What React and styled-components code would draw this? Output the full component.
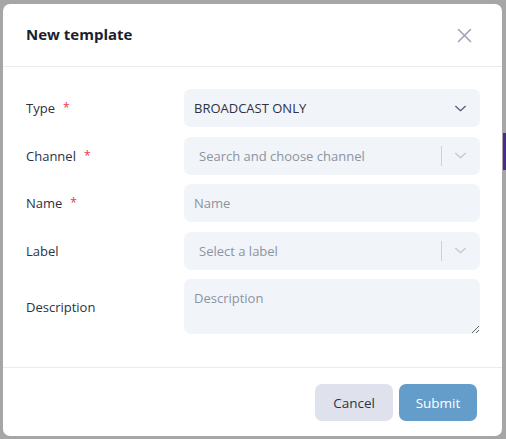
import React from 'react';
import styled, { createGlobalStyle } from 'styled-components';

const GlobalStyle = createGlobalStyle`
  html, body {
    margin: 0;
    padding: 0;
    background: #a6a6a6;
    font-family: "Open Sans", "Liberation Sans", sans-serif;
  }
`;

const Backdrop = styled.div`
  position: relative;
  width: 506px;
  height: 439px;
  box-sizing: border-box;
  padding: 4px 4px 3px 3px;
  overflow: hidden;
`;

// a sliver of the page behind the overlay
const BehindTab = styled.div`
  position: absolute;
  right: 0;
  top: 133px;
  width: 3px;
  height: 37px;
  background: #4b2a8f;
`;

const Modal = styled.div`
  position: relative;
  width: 499px;
  height: 432px;
  background: #fff;
  border-radius: 7px;
  display: flex;
  flex-direction: column;
`;

const Header = styled.div`
  height: 62px;
  display: flex;
  align-items: center;
  justify-content: space-between;
  padding: 0 30px 0 23px;
  border-bottom: 1px solid #e9ebf0;
`;

const Title = styled.h2`
  margin: 0 0 2px;
  font-size: 15px;
  font-weight: 700;
  color: #1b1e2e;
`;

const CloseButton = styled.button`
  border: 0;
  background: none;
  padding: 0;
  width: 15px;
  height: 15px;
  display: flex;
  cursor: pointer;
`;

const Body = styled.div`
  flex: 1;
  display: grid;
  grid-template-columns: 158px 296px;
  grid-auto-rows: min-content;
  row-gap: 9.5px;
  align-items: center;
  padding: 22px 22px 0 23px;
`;

const Label = styled.label`
  font-size: 13px;
  color: #2d3142;
`;

const Required = styled.span`
  color: #e8344e;
  margin-left: 8px;
  font-size: 12px;
  position: relative;
  top: -1px;
`;

const Field = styled.div`
  height: 38px;
  box-sizing: border-box;
  background: #f1f4f8;
  border-radius: 7px;
  display: flex;
  align-items: center;
  padding-left: ${p => (p.$indent ? 15 : 10)}px;
  padding-right: 13px;
  font-size: 13px;
  color: ${p => (p.$muted ? '#8c93a3' : '#2d3142')};
`;

const FieldText = styled.span`
  flex: 1;
`;

const Separator = styled.span`
  width: 1px;
  height: 20px;
  background: #cdd0d8;
  margin-right: 12px;
`;

const TextInput = styled.input`
  height: 38px;
  box-sizing: border-box;
  border: 0;
  outline: none;
  background: #f1f4f8;
  border-radius: 7px;
  padding: 0 10px;
  font: inherit;
  font-size: 13px;
  color: #2d3142;
  &::placeholder { color: #8c93a3; }
`;

const TextArea = styled.textarea`
  height: 55px;
  box-sizing: border-box;
  border: 0;
  outline: none;
  background: #f1f4f8;
  border-radius: 7px;
  padding: 10px 10px;
  font: inherit;
  font-size: 13px;
  color: #2d3142;
  &::placeholder { color: #8c93a3; }
`;

const Footer = styled.div`
  height: 69px;
  box-sizing: border-box;
  border-top: 1px solid #e9ebf0;
  display: flex;
  justify-content: flex-end;
  align-items: flex-start;
  gap: 6px;
  padding: 16px 25px 0 0;
`;

const Button = styled.button`
  width: 78px;
  height: 37px;
  border: 0;
  border-radius: 7px;
  font: inherit;
  font-size: 13.5px;
  font-weight: 500;
  cursor: pointer;
  background: ${p => (p.$primary ? '#659dca' : '#dfe2ec')};
  color: ${p => (p.$primary ? '#ffffff' : '#2f3345')};
`;

const Chevron = ({ color }) => (
  <svg width="13" height="13" viewBox="0 0 24 24" fill="none" stroke={color} strokeWidth="2.4" strokeLinecap="round" strokeLinejoin="round">
    <polyline points="3 8 12 16 21 8" />
  </svg>
);

const CloseIcon = () => (
  <svg width="15" height="15" viewBox="0 0 15 15" fill="none" stroke="#a0a4b4" strokeWidth="1.6" strokeLinecap="round">
    <line x1="1.5" y1="1.5" x2="13.5" y2="13.5" />
    <line x1="13.5" y1="1.5" x2="1.5" y2="13.5" />
  </svg>
);

export default function App() {
  return (
    <>
      <GlobalStyle />
      <Backdrop>
        <BehindTab />
        <Modal>
          <Header>
            <Title>New template</Title>
            <CloseButton aria-label="Close"><CloseIcon /></CloseButton>
          </Header>
          <Body>
            <Label>Type<Required>*</Required></Label>
            <Field>
              <FieldText>BROADCAST ONLY</FieldText>
              <Chevron color="#5a5e77" />
            </Field>

            <Label>Channel<Required>*</Required></Label>
            <Field $muted $indent>
              <FieldText>Search and choose channel</FieldText>
              <Separator />
              <Chevron color="#c4c7cf" />
            </Field>

            <Label>Name<Required>*</Required></Label>
            <TextInput placeholder="Name" />

            <Label>Label</Label>
            <Field $muted $indent>
              <FieldText>Select a label</FieldText>
              <Separator />
              <Chevron color="#c4c7cf" />
            </Field>

            <Label>Description</Label>
            <TextArea placeholder="Description" />
          </Body>
          <Footer>
            <Button>Cancel</Button>
            <Button $primary>Submit</Button>
          </Footer>
        </Modal>
      </Backdrop>
    </>
  );
}
